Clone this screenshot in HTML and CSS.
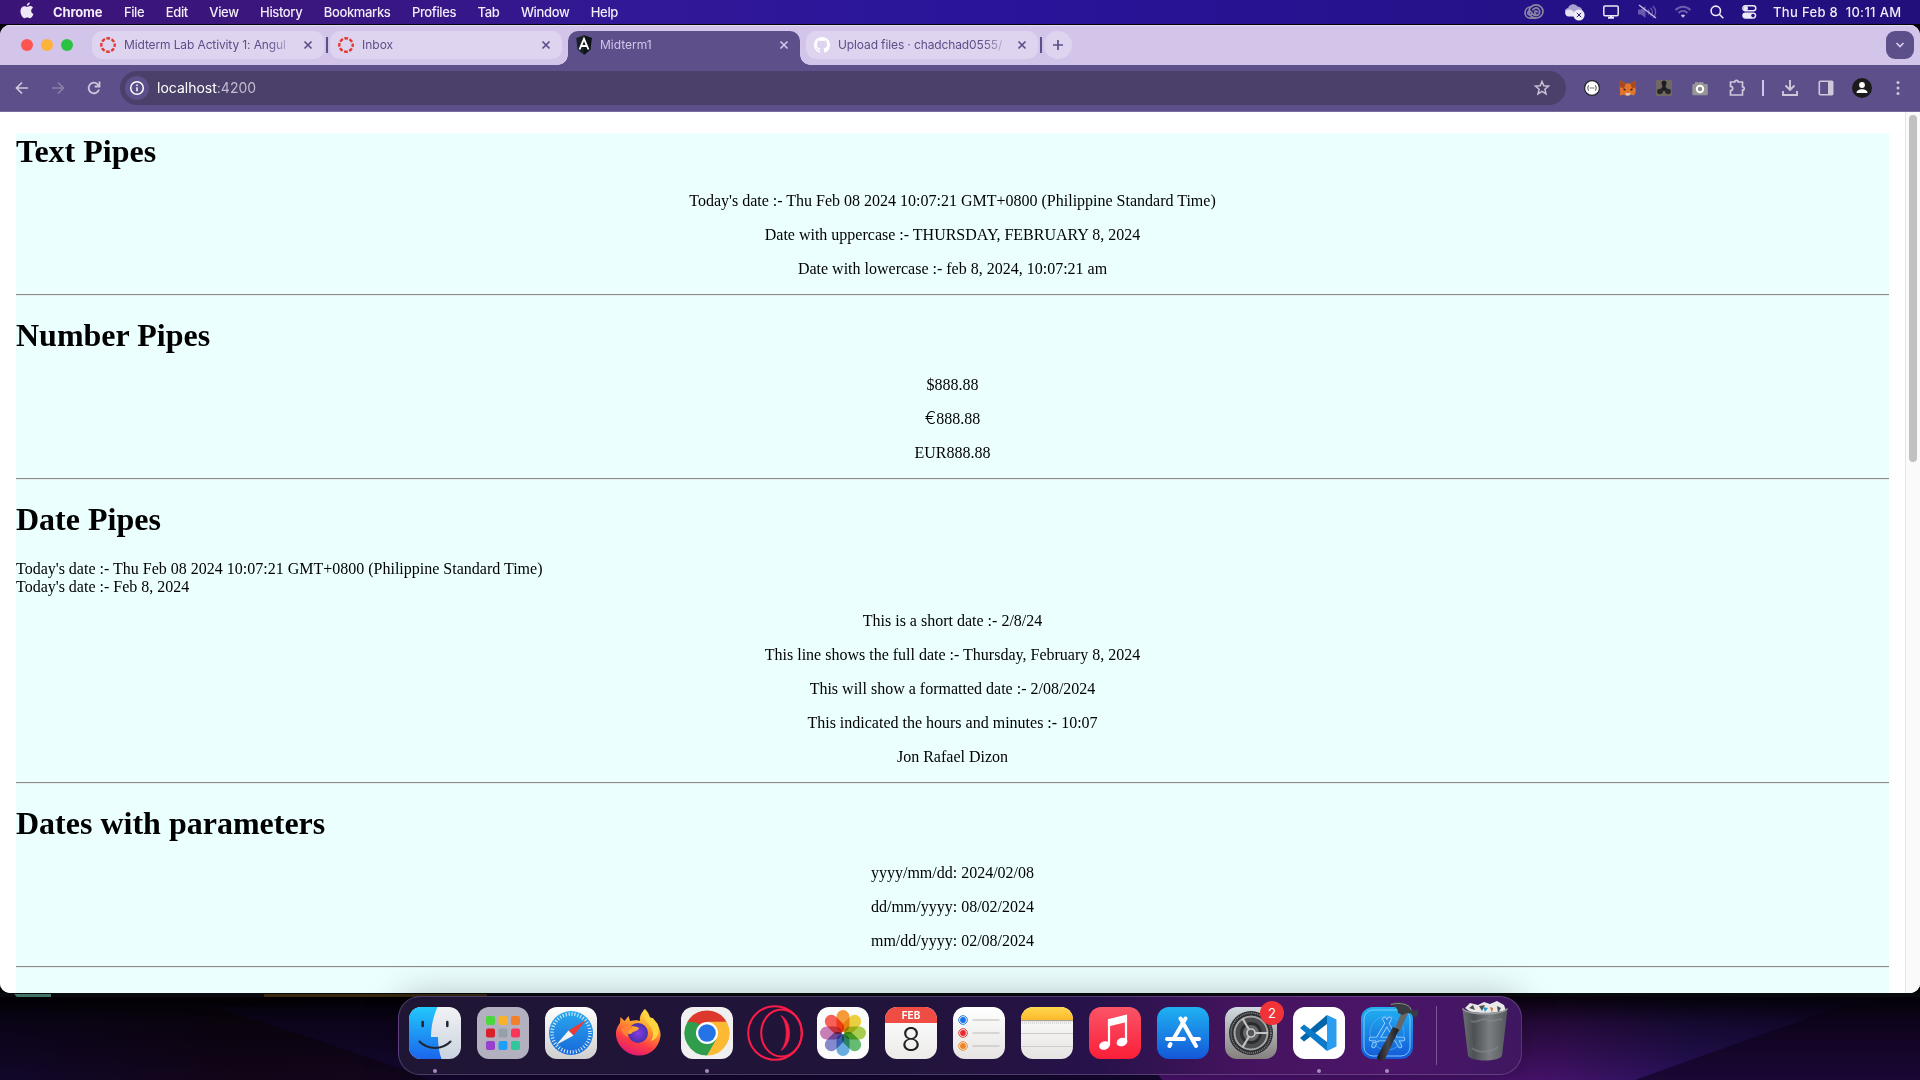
FILE: index.html
```html
<!DOCTYPE html>
<html lang="en">
<head>
<meta charset="utf-8">
<title>Midterm1</title>
<link rel="stylesheet" href="styles.css">
</head>
<body>
<svg class="defs" width="0" height="0" aria-hidden="true">
  <defs>
    <symbol id="x" viewBox="0 0 10 10"><path d="M1.5 1.5l7 7M8.5 1.5l-7 7" stroke="currentColor" stroke-width="1.7" fill="none"/></symbol>
    <symbol id="canvas" viewBox="0 0 16 16"><circle cx="8" cy="8" r="6.7" fill="none" stroke="#e2382f" stroke-width="2.4" stroke-dasharray="3.7 1.56" stroke-dashoffset="1.8"/></symbol>
    <linearGradient id="finderL" x2="0" y2="1"><stop stop-color="#22c8fb"/><stop offset="1" stop-color="#1b65ec"/></linearGradient>
    <linearGradient id="finderR" x2="0" y2="1"><stop stop-color="#f2f2f4"/><stop offset="1" stop-color="#c9d3df"/></linearGradient>
    <linearGradient id="white" x2="0" y2="1"><stop stop-color="#fff"/><stop offset="1" stop-color="#e6e4e2"/></linearGradient>
    <linearGradient id="silver" x2="0" y2="1"><stop stop-color="#fff"/><stop offset="1" stop-color="#cfcfcf"/></linearGradient>
    <linearGradient id="blue" x2="0" y2="1"><stop stop-color="#1fb2f2"/><stop offset="1" stop-color="#1457d8"/></linearGradient>
    <linearGradient id="compass" x2="0" y2="1"><stop stop-color="#2aa9ee"/><stop offset="1" stop-color="#1767d9"/></linearGradient>
    <linearGradient id="music" x2="0" y2="1"><stop stop-color="#fb5468"/><stop offset="1" stop-color="#fa1f38"/></linearGradient>
    <linearGradient id="prefs" x2="0" y2="1"><stop stop-color="#d2dbe0"/><stop offset="1" stop-color="#85807e"/></linearGradient>
    <linearGradient id="yellow" x2="0" y2="1"><stop stop-color="#ffd84f"/><stop offset="1" stop-color="#fcb82a"/></linearGradient>
    <linearGradient id="fire" x1=".75" y1="0" x2=".35" y2="1"><stop stop-color="#ffe64a"/><stop offset=".4" stop-color="#ff9a2c"/><stop offset=".72" stop-color="#ff3d45"/><stop offset="1" stop-color="#e01a74"/></linearGradient>
    <radialGradient id="globe"><stop stop-color="#8a3be8"/><stop offset="1" stop-color="#4632a8"/></radialGradient>
    <linearGradient id="bin"><stop stop-color="#6b7073"/><stop offset=".25" stop-color="#4d5154"/><stop offset=".6" stop-color="#7a7e81"/><stop offset="1" stop-color="#53575a"/></linearGradient>
    <linearGradient id="handle"><stop stop-color="#17171b"/><stop offset=".5" stop-color="#47474d"/><stop offset="1" stop-color="#17171b"/></linearGradient>
  </defs>
</svg>

<header class="menubar">
  <svg class="apple" viewBox="0 0 14 18" width="14" height="18"><path d="M9.8.6c.1 1.7-1.5 3.3-3 3.2C6.600 2.200 8.200.7 9.800.6zM7 4.900c.6 0 1.700-.8 3-.8.9 0 2.200.4 3 1.600-2.700 1.600-2.200 5.100.5 6.200-.5 1.500-2 4.300-3.600 4.300-1 0-1.500-.6-2.700-.6s-1.700.6-2.700.6C2.600 16.200.5 12.500.5 9.300c0-3.200 2-5 3.900-5C5.600 4.300 6.400 4.900 7 4.900z" fill="#eee7f5"/></svg>
  <nav class="menus">
    <b>Chrome</b><span>File</span><span>Edit</span><span>View</span><span>History</span><span>Bookmarks</span><span>Profiles</span><span>Tab</span><span>Window</span><span>Help</span>
  </nav>
  <div class="status">
    <svg width="20" height="16" viewBox="0 0 20 16" fill="none" stroke="#8b86a0" stroke-width="1.700"><ellipse cx="12" cy="7.500" rx="7" ry="6.600"/><path d="M8 2.500C4 2.800 1 5.300 1 8.700c0 3.300 2.500 5.400 5.500 5.400H12"/><path d="M11.500 11.300c-3 .8-4-5-6.500-4.300-2 .8-1.500 4 .8 4 1.700 0 2-.8 2.700-1.500M8.500 6.500c1-2.500 4-3.500 6-1.500s1.500 5-1 6.300C11 12 9.800 6.800 11.800 6.800c1 0 1.200.7 2 1.800"/></svg>
    <svg width="21" height="18" viewBox="0 0 21 18"><path d="M4.500 13a4 4 0 0 1-.4-7.900A5.500 5.500 0 0 1 14 3.700c4 0 5 4 4.300 7L13 13z" fill="#a99fd0"/><path d="M4 13.500a3.600 3.600 0 0 1 .5-7c2-.2 4 .8 5 2.200L12 13.500z" fill="#e7e2f2"/><circle cx="15" cy="12" r="5.600" fill="#f0ecf7"/><path d="M12.800 9.800l4.400 4.400m0-4.400l-4.400 4.400" stroke="#2a1590"/></svg>
    <svg width="16" height="14" viewBox="0 0 16 14"><rect x=".8" y="1" width="14.400" height="9.700" rx="1.300" fill="none" stroke="#eee9f6" stroke-width="1.500"/><path d="M5 12.700h6M8 11v2" stroke="#eee9f6" stroke-width="2"/></svg>
    <svg width="20" height="16" viewBox="0 0 20 16"><path d="M1 5.500h3L8.500 2v12L4 10.500H1z" fill="#6a59ad"/><path d="M11 5.500c1.500 1.500 1.500 3.500 0 5M13.500 3.700c2.500 2.500 2.500 6 0 8.500M16 2c3.500 3.500 3.500 8.500 0 12" fill="none" stroke="#6a59ad" stroke-width="1.300"/><path d="M2 1l17 13" stroke="#c9c1e2" stroke-width="1.300"/></svg>
    <svg class="wifi" width="18" height="14" viewBox="0 0 18 14" fill="none" stroke="#6f5db0" stroke-width="2"><path d="M1.500 5c4.300-4.300 10.700-4.300 15 0M4.500 8c2.600-2.600 6.400-2.600 9 0"/><path d="M6.800 10.400c1.200-1.200 3.200-1.200 4.400 0L9 12.800z" fill="#c2b8e0" stroke="none"/></svg>
    <svg width="14" height="14" viewBox="0 0 14 14" fill="none" stroke="#eee9f6" stroke-width="1.600"><circle cx="5.800" cy="5.800" r="4.700"/><path d="M9.300 9.300l4 4"/></svg>
    <svg width="15" height="14" viewBox="0 0 15 14"><rect x=".8" y=".8" width="13" height="5" rx="2.500" fill="none" stroke="#eee9f6" stroke-width="1.400"/><circle cx="3.800" cy="3.300" r="2.200" fill="#eee9f6"/><rect x=".3" y="7.500" width="14" height="6.200" rx="3.100" fill="#eee9f6"/><circle cx="11" cy="10.600" r="1.800" fill="#28118b"/></svg>
    <span class="clock">Thu Feb 8&nbsp; 10:11 AM</span>
  </div>
</header>

<main class="window">
  <div class="tabstrip">
    <div class="lights"><i class="red"></i><i class="amber"></i><i class="green"></i></div>
    <div class="tab"><svg width="16" height="16"><use href="#canvas"/></svg><span class="label fade">Midterm Lab Activity 1: Angul</span><svg width="10" height="10"><use href="#x"/></svg></div>
    <i class="sep"></i>
    <div class="tab"><svg width="16" height="16"><use href="#canvas"/></svg><span class="label">Inbox</span><svg width="10" height="10"><use href="#x"/></svg></div>
    <div class="tab active"><svg width="16" height="20" viewBox="0 0 16 20"><path d="M8 .3l7.700 2.800-1.200 11.500L8 19.700 1.500 14.600.3 3.100z" fill="#182126"/><path d="M8 .3l7.700 2.800-1.200 11.500L8 19.700z" fill="#0d1418"/><path d="M3.500 14.500L8 4l4.500 10.500M5.500 11h5" fill="none" stroke="#fff" stroke-width="1.900"/></svg><span class="label">Midterm1</span><svg width="10" height="10"><use href="#x"/></svg></div>
    <div class="tab"><svg width="16" height="16" viewBox="0 0 16 16"><path fill="#fff" d="M8 0C3.580 0 0 3.580 0 8c0 3.540 2.290 6.530 5.470 7.590.4.070.55-.17.55-.38 0-.19-.01-.82-.01-1.490-2.010.37-2.530-.49-2.690-.94-.09-.23-.48-.94-.82-1.130-.28-.15-.68-.52-.01-.53.63-.01 1.080.58 1.230.82.720 1.210 1.870.87 2.330.66.070-.52.280-.87.510-1.070-1.780-.2-3.640-.89-3.640-3.950 0-.87.310-1.590.82-2.150-.08-.2-.36-1.020.080-2.120 0 0 .67-.21 2.200.82.640-.18 1.320-.27 2-.27s1.360.090 2 .27c1.530-1.040 2.200-.82 2.200-.82.440 1.100.16 1.920.080 2.120.510.560.820 1.270.820 2.150 0 3.070-1.870 3.750-3.650 3.950.290.250.540.730.540 1.480 0 1.070-.010 1.930-.010 2.200 0 .210.150.460.550.380A8.010 8.010 0 0 0 16 8c0-4.420-3.580-8-8-8z"/></svg><span class="label fade">Upload files · chadchad0555/</span><svg width="10" height="10"><use href="#x"/></svg></div>
    <i class="sep"></i>
    <div class="newtab"><svg width="12" height="12" viewBox="0 0 12 12"><path d="M6 1v10M1 6h10" stroke="currentColor" stroke-width="1.700"/></svg></div>
    <div class="tabsearch"><svg width="10" height="8" viewBox="0 0 10 8"><path d="M1.500 2L5 5.500 8.500 2" fill="none" stroke="#d8cbee" stroke-width="1.700"/></svg></div>
  </div>

  <div class="toolbar">
    <svg width="16" height="16" viewBox="0 0 16 16" fill="none" stroke="#cfc8da" stroke-width="1.700"><path d="M14 8H3M8 2.500L2.500 8 8 13.500"/></svg>
    <svg width="16" height="16" viewBox="0 0 16 16" fill="none" stroke="#8c80aa" stroke-width="1.700"><path d="M2 8h11M8 2.500L13.500 8 8 13.500"/></svg>
    <svg width="16" height="16" viewBox="0 0 16 16" fill="none" stroke="#cfc8da" stroke-width="1.800"><path d="M13 9.500a5.300 5.300 0 1 1-1.300-5.200L13.500 6"/><path d="M13.500 1.500v5H8.700"/></svg>
    <div class="omnibox">
      <span class="info"><svg width="16" height="16" viewBox="0 0 16 16" fill="none" stroke="#fff" stroke-width="1.500"><circle cx="8" cy="8" r="6.300"/><path d="M8 7.200v4M8 4.500v1.600"/></svg></span>
      <span class="url">localhost<em>:4200</em></span>
      <svg width="18" height="18" viewBox="0 0 18 18" fill="none" stroke="#c9c1d6" stroke-width="1.500"><path d="M9 2.500l1.800 4.300 4.700.4-3.600 3.100 1.100 4.600L9 12.400l-4 2.500 1.100-4.600-3.600-3.100 4.700-.4z"/></svg>
    </div>
    <div class="extensions">
      <svg viewBox="0 0 20 20"><circle cx="10" cy="10" r="7.400" fill="#fff" stroke="#22222a" stroke-width="1.200"/><path d="M7 7.500c-1.200 0-.5 2-1.700 2.500 1.200.5.5 2.500 1.700 2.500M13 7.500c1.200 0 .5 2 1.700 2.500-1.200.5-.5 2.500-1.700 2.500" fill="none" stroke="#333" stroke-width="1"/><path d="M7.800 10h4.400" stroke="#333" stroke-width="1" stroke-dasharray="1 .7"/></svg>
      <svg viewBox="0 0 20 20"><path d="M2 2.500l6 3h4l6-3-.6 7 .6 4-2 4-4-1-1.500 1.300h-3L6 16.500l-4 1 0-4.500-.3-3.500z" fill="#e2742b"/><path d="M2 2.500l6 3-2 4.500-4-.5zM18 2.500l-6 3 2 4.500 4-.5z" fill="#a84a1f"/><path d="M7 15l1.500 2.500h3L13 15z" fill="#d9c5b3"/><path d="M5.500 11l2 1M14.500 11l-2 1" stroke="#3a2a25" stroke-width="1.400"/></svg>
      <svg viewBox="0 0 20 20"><rect x="2" y="2" width="16" height="16" rx="1" fill="#716961"/><path d="M10 4v6M10 10l-3 3M10 10l3 3" stroke="#1c1d21" stroke-width="3.500"/><circle cx="10" cy="5" r="2.500" fill="#1c1d21"/><circle cx="5.900" cy="13.500" r="2.800" fill="#25272b"/><circle cx="14.100" cy="13.500" r="2.800" fill="#25272b"/></svg>
      <svg viewBox="0 0 20 20"><path d="M3 6h2V4h3v1.500L9 4h4l1 2h2.500q1.300 0 1.300 1.300v8.700q0 1.300-1.300 1.300h-13Q2.300 17.300 2.300 16V7z" fill="#969696"/><circle cx="10" cy="11" r="3.200" fill="#8a8a8a" stroke="#fff" stroke-width="2"/></svg>
      <svg class="puzzle" viewBox="0 0 20 20"><path d="M3.500 4h4.300a1.700 1.700 0 0 1 3.400 0H15.500v4.800a1.700 1.700 0 0 1 0 3.400V17H3.500v-4.300a2.200 2.200 0 0 0 0-4.400z" fill="none" stroke="#cfc8da" stroke-width="1.700"/></svg>
      <i class="bar"></i>
      <svg viewBox="0 0 20 20" fill="none" stroke="#cfc8da" stroke-width="1.900"><path d="M10 2v9M5.500 7.500L10 12l4.500-4.500M3 13v4h14v-4"/></svg>
      <svg viewBox="0 0 20 20"><rect x="3.300" y="3.300" width="13.400" height="13.400" rx="1" fill="none" stroke="#cfc8da" stroke-width="1.600"/><path d="M12 3h5v14h-5z" fill="#cfc8da"/></svg>
      <svg viewBox="0 0 20 20"><circle cx="10" cy="10" r="10" fill="#1b1b1d"/><circle cx="10" cy="7" r="2.900" fill="#fff"/><path d="M4.500 15c0-5 11-5 11 0z" fill="#fff"/></svg>
      <svg viewBox="0 0 20 20" fill="#cfc8da"><circle cx="10" cy="4.500" r="1.500"/><circle cx="10" cy="10" r="1.500"/><circle cx="10" cy="15.500" r="1.500"/></svg>
    </div>
  </div>

  <div class="viewport">
    <article class="page">
      <h1>Text Pipes</h1>
      <p>Today's date :- Thu Feb 08 2024 10:07:21 GMT+0800 (Philippine Standard Time)</p>
      <p>Date with uppercase :- THURSDAY, FEBRUARY 8, 2024</p>
      <p>Date with lowercase :- feb 8, 2024, 10:07:21 am</p>
      <hr>
      <h1>Number Pipes</h1>
      <p>$888.88</p>
      <p><span class="euro">€</span>888.88</p>
      <p>EUR888.88</p>
      <hr>
      <h1>Date Pipes</h1>
      Today's date :- Thu Feb 08 2024 10:07:21 GMT+0800 (Philippine Standard Time)<br>
      Today's date :- Feb 8, 2024
      <p>This is a short date :- 2/8/24</p>
      <p>This line shows the full date :- Thursday, February 8, 2024</p>
      <p>This will show a formatted date :- 2/08/2024</p>
      <p>This indicated the hours and minutes :- 10:07</p>
      <p>Jon Rafael Dizon</p>
      <hr>
      <h1>Dates with parameters</h1>
      <p>yyyy/mm/dd: 2024/02/08</p>
      <p>dd/mm/yyyy: 08/02/2024</p>
      <p>mm/dd/yyyy: 02/08/2024</p>
      <hr>
    </article>
    <div class="scroll"><i></i></div>
  </div>
</main>

<footer class="desk">
  <svg class="wallpaper" width="1920" height="87" viewBox="0 0 1920 87" preserveAspectRatio="none">
    <defs>
      <linearGradient id="wp"><stop stop-color="#12072a"/><stop offset=".12" stop-color="#120518"/><stop offset=".45" stop-color="#120828"/><stop offset=".6" stop-color="#4a126c"/><stop offset=".8" stop-color="#46126a"/><stop offset=".88" stop-color="#261158"/><stop offset="1" stop-color="#1c0740"/></linearGradient>
      <linearGradient id="fall" x2="0" y2="1"><stop stop-color="#000" stop-opacity=".95"/><stop offset=".35" stop-color="#000" stop-opacity=".45"/><stop offset="1" stop-color="#000" stop-opacity="0"/></linearGradient>
    </defs>
    <path d="M0 0h1920v87H0z" fill="url(#wp)"/>
    <path d="M205 12Q310 42 430 87H1162L1110 12z" fill="#150831"/>
    <path d="M1635 87L1850 10H1920V87z" fill="#1a0735"/>
    <path d="M0 0h1920v87H0z" fill="url(#fall)"/>
    <path d="M0 0h1920v4H0z" fill="#080a0d"/>
    <path d="M14 1h37v3H17z" fill="#437267"/><path d="M264 1h223v3H264z" fill="#38290f"/>
  </svg>
  <div class="dock">
    <div class="app running"><svg viewBox="0 0 52 52"><rect width="52" height="52" rx="12" fill="url(#finderR)"/><path d="M12 0h16.500C24 10 22 20 22 30h7c0 8 1 15 3.500 22H12A12 12 0 0 1 0 40V12A12 12 0 0 1 12 0z" fill="url(#finderL)"/><path d="M10.500 34.500c8 8.500 23 8.500 31 0" fill="none" stroke="#202530" stroke-width="2" stroke-linecap="round"/><path d="M13.700 15v4M38.300 15v4" stroke="#202530" stroke-width="2.500" stroke-linecap="round"/></svg></div>
    <div class="app"><svg viewBox="0 0 52 52"><rect width="52" height="52" rx="12" fill="#b3b0bf"/><g><rect x="9" y="9" width="9" height="9" rx="2" fill="#4bd83e"/><rect x="21.500" y="9" width="9" height="9" rx="2" fill="#f9b129"/><rect x="34" y="9" width="9" height="9" rx="2" fill="#f2802a"/><rect x="9" y="21.500" width="9" height="9" rx="2" fill="#d91f28"/><rect x="21.500" y="21.500" width="9" height="9" rx="2" fill="#94a1a6"/><rect x="34" y="21.500" width="9" height="9" rx="2" fill="#fb3557"/><rect x="9" y="34" width="9" height="9" rx="2" fill="#9740cc"/><rect x="21.500" y="34" width="9" height="9" rx="2" fill="#1e9ffa"/><rect x="34" y="34" width="9" height="9" rx="2" fill="#30c79d"/></g></svg></div>
    <div class="app"><svg viewBox="0 0 52 52"><rect width="52" height="52" rx="12" fill="url(#silver)"/><circle cx="26" cy="26" r="22" fill="url(#compass)"/><circle cx="26" cy="26" r="19" fill="none" stroke="#e0f0fb" stroke-width="3.600" stroke-dasharray="1 1.984"/><path d="M41 13L23.500 23.500l5 5z" fill="#ed3a34"/><path d="M11 38l12.500-14.500 5 5z" fill="#f3f3f3"/></svg></div>
    <div class="app"><svg viewBox="0 0 52 52"><path d="M32 2c3 3 4.500 6 5 9 3-1 4 1 5.500 4C46 19 48 25 47.500 29 46 41 37 48.500 26 48.500S4 40 3 28c-.5-5 1.500-9 4-12l.5-6 4 4 4-5 1.500 5c4-1 8-1 10 0-1-5 2-9 5-12z" fill="url(#fire)"/><path d="M31 2c-3 9 4 13 8 20 2 5 1 9-1 12 7-2 9-9 7-16C43 12 34 11 31 2z" fill="#ffd43f"/><circle cx="25" cy="26" r="10" fill="url(#globe)"/><path d="M14 20c4-1 9-1 12 1-1 3-4 3-6 4-2 2-3 3-6 1z" fill="#ffa42e"/><path d="M8 22c4-3 9-3 12-1-4 1-6 5-5 9-3-1-6-4-7-8z" fill="#ff8234"/></svg></div>
    <div class="app running"><svg viewBox="0 0 52 52"><rect width="52" height="52" rx="12" fill="#f1f0f0"/><path d="M26 26L6.500 14.700A22.500 22.500 0 0 1 45.500 14.700z" fill="#dc382c"/><path d="M26 26L6.500 14.700a22.500 22.500 0 0 0 19.500 33.800z" fill="#2f9d4c"/><path d="M26 26h9.700L26 48.500A22.500 22.500 0 0 0 45.500 14.700H26z" fill="#fbb934"/><path d="M16.300 31.500L6.500 14.700q10 0 12 3z" fill="#2f9d4c"/><path d="M16.300 31.500L26 37l9.700-5.500L26 48.500z" fill="#2f9d4c"/><circle cx="26" cy="26" r="11" fill="#fff"/><circle cx="26" cy="26" r="8.800" fill="#2573e6"/></svg></div>
    <div class="app"><svg class="opera" viewBox="0 0 56 56" fill="none" stroke="#fb1d47" stroke-width="2"><circle cx="28" cy="28" r="26.800"/><ellipse cx="34.500" cy="28" rx="20.300" ry="23.500"/><path d="M34 10.500c11.500 6 11.500 29 0 35 7-9 7-26 0-35z" fill="#fb1d47" stroke-width=".6"/></svg></div>
    <div class="app"><svg viewBox="0 0 52 52"><rect width="52" height="52" rx="12" fill="#fbfbfb"/><g class="petals"><rect x="19.500" y="3" width="13" height="22" rx="6.500" fill="#f99427"/><rect x="19.500" y="3" width="13" height="22" rx="6.500" fill="#ecd02b" transform="rotate(45 26 26)"/><rect x="19.500" y="3" width="13" height="22" rx="6.500" fill="#a3cc3c" transform="rotate(90 26 26)"/><rect x="19.500" y="3" width="13" height="22" rx="6.500" fill="#54b765" transform="rotate(135 26 26)"/><rect x="19.500" y="3" width="13" height="22" rx="6.500" fill="#5aa7e0" transform="rotate(180 26 26)"/><rect x="19.500" y="3" width="13" height="22" rx="6.500" fill="#7a7fcb" transform="rotate(225 26 26)"/><rect x="19.500" y="3" width="13" height="22" rx="6.500" fill="#c673b3" transform="rotate(270 26 26)"/><rect x="19.500" y="3" width="13" height="22" rx="6.500" fill="#fb5045" transform="rotate(315 26 26)"/></g></svg></div>
    <div class="app calendar"><span class="month">FEB</span><span class="day">8</span></div>
    <div class="app"><svg viewBox="0 0 52 52"><rect width="52" height="52" rx="12" fill="url(#white)"/><g fill="none" stroke-width="1"><circle cx="10" cy="13" r="4.300" stroke="#2377e6"/><circle cx="10" cy="26" r="4.300" stroke="#ec3438"/><circle cx="10" cy="39" r="4.300" stroke="#ef8a28"/></g><circle cx="10" cy="13" r="2.900" fill="#1572ea"/><circle cx="10" cy="26" r="2.900" fill="#ee2830"/><circle cx="10" cy="39" r="2.900" fill="#ef841f"/><path d="M19.500 13h27M19.500 26h27M19.500 39h27" stroke="#b9b9b9" stroke-width="1.200"/></svg></div>
    <div class="app"><svg viewBox="0 0 52 52"><rect width="52" height="52" rx="12" fill="url(#white)"/><path d="M0 13.500V12A12 12 0 0 1 12 0H40A12 12 0 0 1 52 12v1.500z" fill="url(#yellow)"/><path d="M0 13.700h52" stroke="#989797"/><path d="M1 16h50" stroke="#bbb" stroke-dasharray="1 1"/><path d="M0 26.500h52M0 39.500h52" stroke="#cfcdcb"/></svg></div>
    <div class="app"><svg viewBox="0 0 52 52"><rect width="52" height="52" rx="12" fill="url(#music)"/><path d="M20 38V13l17-4v26" fill="none" stroke="#fff" stroke-width="2.200"/><path d="M19 12.500L38 8v7L19 19.500z" fill="#fff"/><ellipse cx="15.500" cy="38.500" rx="5.500" ry="4.200" fill="#fff" transform="rotate(-18 15.500 38.500)"/><ellipse cx="33" cy="35" rx="5.500" ry="4.200" fill="#fff" transform="rotate(-18 33 35)"/></svg></div>
    <div class="app"><svg viewBox="0 0 52 52" stroke-linecap="round"><rect width="52" height="52" rx="12" fill="url(#blue)"/><path d="M28.500 11.500L16.500 32M13.500 37l-1 2M10 32h17M36 32h6M23.500 11.500L39 39" stroke="#fff" stroke-width="4" fill="none"/></svg></div>
    <div class="app"><svg viewBox="0 0 52 52"><rect width="52" height="52" rx="12" fill="url(#prefs)"/><circle cx="26" cy="26" r="22" fill="#2c2e31"/><circle cx="26" cy="26" r="20" fill="none" stroke="#8d8d8d" stroke-width="1.500" stroke-dasharray="1 1"/><circle cx="26" cy="26" r="16.500" fill="#4b4c4e" stroke="#a5a5a5" stroke-width="2"/><circle cx="26" cy="26" r="9.500" fill="#66676a" stroke="#2b2c2e" stroke-width="3"/><path d="M26 26h17M26 26l-8.500-14.500M26 26l-8.500 14.500" stroke="#c4c4c4" stroke-width="2.200"/><circle cx="26" cy="26" r="4" fill="#55565a" stroke="#c4c4c4" stroke-width="1.700"/></svg><span class="badge">2</span></div>
    <div class="app running"><svg viewBox="0 0 52 52"><rect width="52" height="52" rx="12" fill="#fff"/><path d="M7 31l4 3.500L34 17V8z" fill="#0065a9"/><path d="M7 21l4-3.500L34 35v9z" fill="#0b7ac9"/><path d="M34 8l9.500 4.500v27L34 44z" fill="#2a9df0"/></svg></div>
    <div class="app running"><svg class="hammer" viewBox="0 0 60 62"><g transform="translate(0 6)"><rect width="52" height="52" rx="12" fill="url(#blue)"/><rect x="3" y="3" width="46" height="46" rx="9" fill="none" stroke="#7cc8fa"/><circle cx="26" cy="26" r="17" fill="none" stroke="#58aef0" stroke-width=".7"/><g fill="none" stroke-linecap="round"><path d="M28.500 12L16 33M13.500 37l-1 2M10 32h32M23.500 12L39 39" stroke="#a5d9fc" stroke-width="4.500"/><path d="M28.500 12L16 33M13.500 37l-1 2M10 32h32M23.500 12L39 39" stroke="#2387e8" stroke-width="2.900"/></g></g><path d="M41 10l6 2-9 20-5-2z" fill="#66666b"/><path d="M32 26l6 2.500L24 58c-2 3-8 1-8-2z" fill="url(#handle)"/><path d="M29 3c7-3 16-2 20 2l1.500 3.500 3.500 1.500 2-1.500 1.500 1-1 6-2.500 1-4-4-5-.5-3 2-5-2c0-4-2-7-8-8z" fill="#3b3c41"/><path d="M30 3.500c7-2 15-1 18.500 2.500l2 3" stroke="#85868d" fill="none"/></svg></div>
    <i class="divider"></i>
    <div class="app trash"><svg viewBox="0 0 52 62"><path d="M6 7l5-5 8 2 6-3 6 2 7-3 7 4 2 6-10 5H17z" fill="#e9e9ea"/><path d="M10 7l4-3 2 5zM20 5l3 5 3-6zM38 5l4 2-3 5z" fill="#50504f"/><path d="M24 6l5 1-3 4z" fill="#2a98c9"/><path d="M31 6l3 1-1 5z" fill="#d96f34"/><path d="M3.500 8c8 5 37 5 45 0L43 55c-4 6-30 6-34 0z" fill="url(#bin)"/><path d="M3.500 7.500c6 7 39 7 45 0" fill="none" stroke="#9b9fa1" stroke-width="1.300"/><path d="M12 20c7 3 10-4 17-1s10-3 14 0M13 47c6 5 18 5 26-1" fill="none" stroke="#898e90" stroke-width="2" opacity=".5"/></svg></div>
  </div>
</footer>
</body>
</html>
```

FILE: styles.css
```css
* { box-sizing: border-box; }

body {
  margin: 0;
  width: 1920px;
  height: 1080px;
  overflow: hidden;
  display: flex;
  flex-direction: column;
  background: #050308;
  font-family: Inter, "Liberation Sans", sans-serif;
}

svg { display: block; flex: none; }
.defs { position: absolute; }

/* system menu bar */
.menubar {
  height: 24px;
  flex: none;
  display: flex;
  align-items: center;
  padding: 0 19px 0 20px;
  background: linear-gradient(90deg, #3b1478 0, #3a167e 300px, #311897 640px, #29149a 1000px, #26128c 1400px, #220f7c 1920px);
  color: #f1ecf7;
  font-size: 13px;
  font-weight: 500;
}
.apple { margin: -2px 19px 0 0; }
.menus { display: flex; gap: 21.5px; letter-spacing: -0.37px; }
.menus b { font-weight: 700; letter-spacing: -0.15px; }
.status { margin-left: auto; display: flex; align-items: center; gap: 18px; }
.status svg:first-child { margin-right: 2px; }
.status .wifi { margin-left: -1px; }
.clock { width: 128px; margin-left: -2px; white-space: nowrap; letter-spacing: 0.33px; }

/* browser window */
.window {
  height: 968px;
  margin-top: 1px;
  flex: none;
  display: flex;
  flex-direction: column;
  border-radius: 10px;
  overflow: hidden;
  background: #fff;
}
.tabstrip {
  height: 40px;
  flex: none;
  display: flex;
  align-items: flex-start;
  padding: 5px 6px 0 21px;
  background: #d3c5ea;
  border-top: 1px solid #e4dcf2;
  color: #5c4e88;
}
.lights { display: flex; gap: 8px; padding-top: 8px; margin-right: 19px; }
.lights i { width: 12px; height: 12px; border-radius: 50%; }
.red { background: #fe5450; }
.amber { background: #fdb23c; }
.green { background: #2bc143; }
.tab {
  width: 232px;
  height: 28px;
  flex: none;
  display: flex;
  align-items: center;
  padding: 0 11px 0 8px;
  border-radius: 10px;
  background: #dfd4ef;
  font-size: 12px;
}
.label {
  flex: 1;
  min-width: 0;
  margin: 0 11px 0 8px;
  padding-bottom: 1px;
  white-space: nowrap;
}
.fade {
  letter-spacing: -0.12px;
  mask-image: linear-gradient(90deg, #000 145px, transparent 172px);
}
.tab.active {
  position: relative;
  height: 34px;
  margin: 0 6px;
  padding-bottom: 6px;
  border-radius: 10px 10px 0 0;
  background: #5d4f8a;
  color: #d3c5ea;
}
.tab.active::before, .tab.active::after {
  content: "";
  position: absolute;
  bottom: 0;
  width: 10px;
  height: 10px;
}
.tab.active::before { left: -10px; background: radial-gradient(circle at 0 0, transparent 9.5px, #5d4f8a 10px); }
.tab.active::after { right: -10px; background: radial-gradient(circle at 100% 0, transparent 9.5px, #5d4f8a 10px); }
.sep { width: 2px; height: 16px; margin: 6px 2px 0; background: #5c4e88; flex: none; }
.newtab {
  width: 28px;
  height: 28px;
  border-radius: 50%;
  background: #dfd4ef;
  display: grid;
  place-items: center;
}
.tabsearch {
  width: 28px;
  height: 28px;
  margin-left: auto;
  border-radius: 9px;
  background: #5d4f8a;
  display: grid;
  place-items: center;
}

.toolbar {
  height: 47px;
  flex: none;
  display: flex;
  align-items: center;
  gap: 20px;
  padding: 0 12px 0 14px;
  background: #5d4f8a;
  border-bottom: 1px solid #796da0;
}
.omnibox {
  width: 1446px;
  height: 34px;
  margin-left: -2px;
  flex: none;
  display: flex;
  align-items: center;
  padding: 0 15px 0 5px;
  border-radius: 17px;
  background: #4b4069;
}
.info { width: 24px; height: 24px; border-radius: 50%; background: #5d4f8a; display: grid; place-items: center; }
.url { flex: 1; margin-left: 8px; padding-bottom: 1px; color: #fff; font-size: 14px; }
.url em { font-style: normal; color: #c2bbcf; }
.extensions { display: flex; align-items: center; gap: 16px; margin-left: -4px; }
.extensions svg { width: 20px; height: 20px; }
.extensions .puzzle { margin: 0 -1px 0 1px; }
.bar { width: 2px; height: 16px; background: #d3c5ea; }

/* web page */
.viewport {
  flex: 1;
  min-height: 0;
  display: flex;
  background: #fff;
  font: 16px/18px "Liberation Serif", "Times New Roman", serif;
  color: #000;
}
.page { flex: 1; margin: 21.4px 16px 0; background: #ecffff; }
.page h1 { margin: 21.5px 0; font-size: 32px; line-height: 37px; }
.page h1:first-child { margin-top: 0; }
.page p { margin: 16px 0; text-align: center; }
.page hr { margin: 8px 0; border: 0; border-top: 1px solid #8c8c8c; border-bottom: 1px solid #e4eeee; }
.euro { font: 300 17px/16px Inter, sans-serif; }
.scroll { width: 15px; flex: none; background: #fafafa; border-left: 1px solid #e6e6e6; padding: 3px 0 0 3px; }
.scroll i { display: block; width: 8px; height: 347px; border-radius: 4px; background: #c1c1c1; }

/* desktop and dock */
.desk { position: relative; height: 87px; flex: none; display: flex; justify-content: center; align-items: flex-start; padding-top: 3px; }
.wallpaper { position: absolute; left: 0; top: 0; }
.dock {
  position: relative;
  width: 1124px;
  height: 79px;
  display: flex;
  gap: 16px;
  padding: 10px;
  border: 1px solid rgba(180, 160, 210, .3);
  border-radius: 22px;
  background: linear-gradient(90deg, #1f1534 0, #21143b 45%, #27124a 62%, #46145f 76%, #4b1569 88%, #3f1760 100%);
  box-shadow: 0 0 36px rgba(0, 0, 0, .28);
}
.app { position: relative; width: 52px; height: 52px; flex: none; }
.app > svg { width: 52px; height: 52px; overflow: visible; }
.app .opera { width: 56px; height: 56px; margin: -2px; }
.app .hammer { width: 60px; height: 62px; margin-top: -6px; }
.running::after {
  content: "";
  position: absolute;
  left: 24px;
  top: 62px;
  width: 4px;
  height: 4px;
  border-radius: 50%;
  background: #a78bbe;
}
.petals rect { mix-blend-mode: multiply; opacity: .9; }
.calendar {
  display: flex;
  flex-direction: column;
  border-radius: 12px;
  overflow: hidden;
  background: linear-gradient(#fff, #ecebea);
  text-align: center;
}
.month { height: 16px; line-height: 17px; background: #ef4c43; color: #fff; font-size: 10px; font-weight: 700; }
.day { line-height: 34px; font-size: 32px; font-weight: 300; color: #222; }
.badge {
  position: absolute;
  right: -7px;
  top: -6px;
  width: 24px;
  height: 24px;
  border-radius: 50%;
  background: #f03338;
  color: #fff;
  font-size: 13px;
  line-height: 24px;
  text-align: center;
}
.divider { width: 1px; height: 59px; margin: -1px 6px 0 7px; background: rgba(190, 160, 215, .45); }
.trash > svg { width: 52px; height: 62px; margin-top: -6px; }
```
